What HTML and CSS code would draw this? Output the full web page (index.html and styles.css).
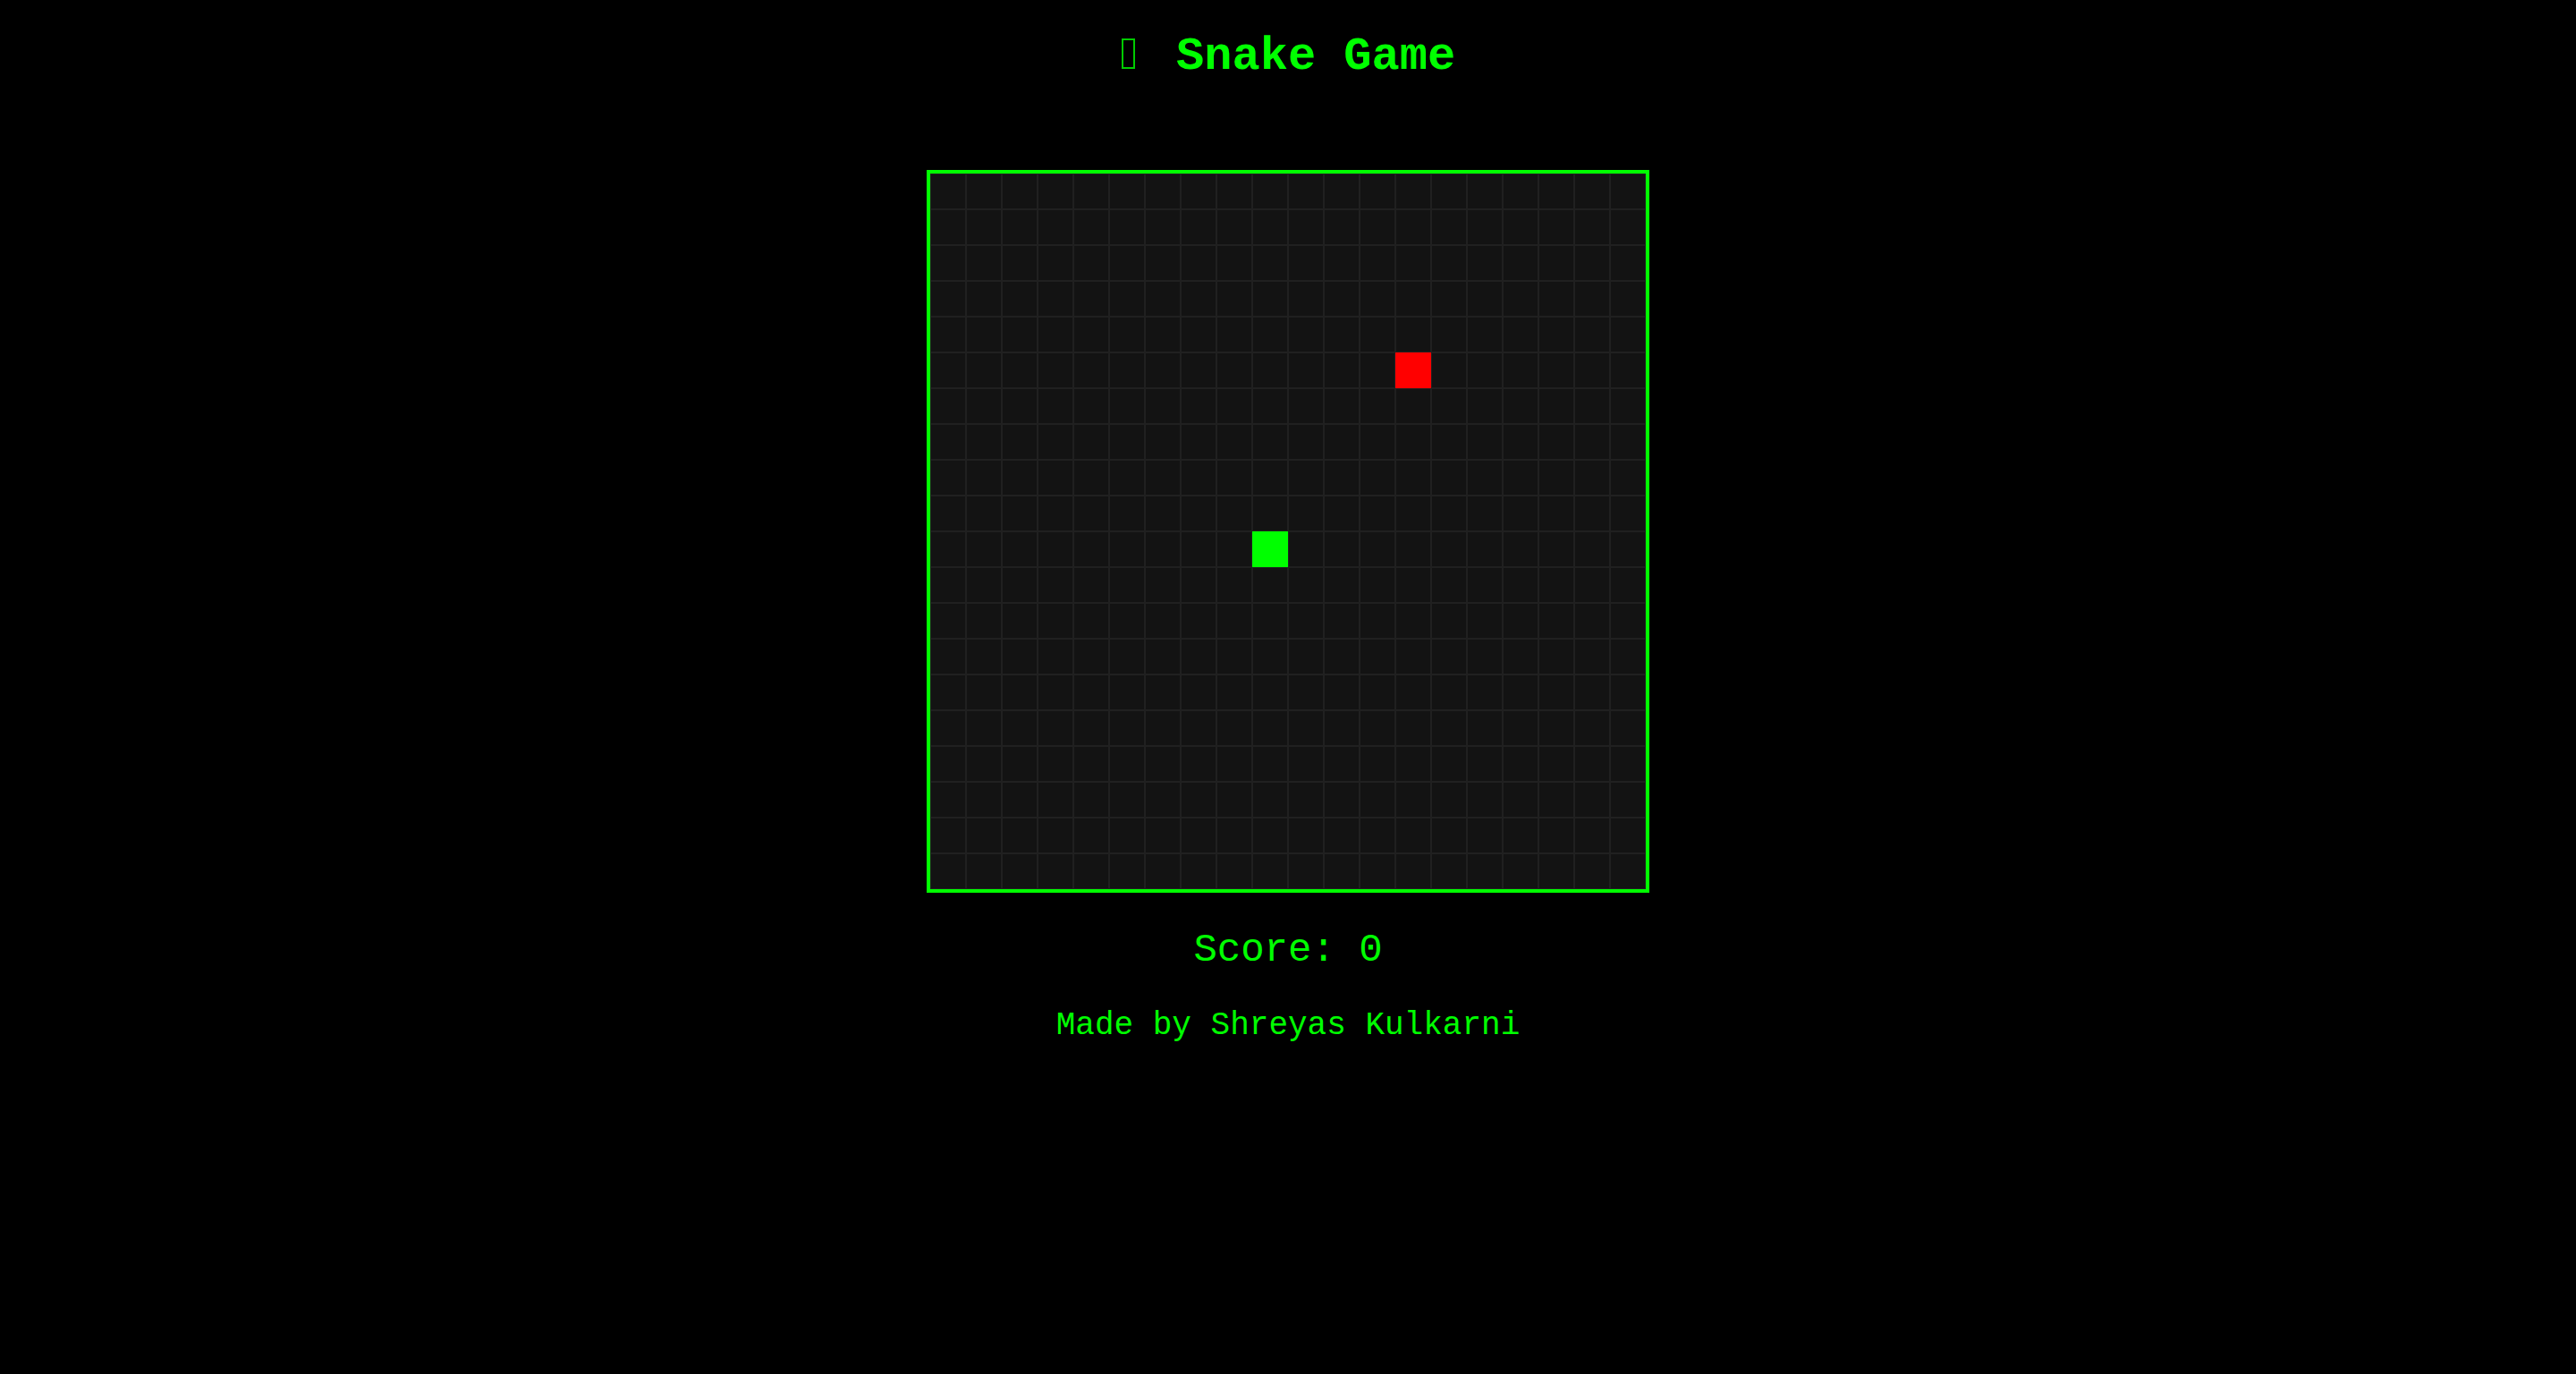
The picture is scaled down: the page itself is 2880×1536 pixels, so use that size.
FILE: index.html
```html
<!DOCTYPE html>
<html>
<head>
<meta charset="utf-8">
<title>Snake Game</title>
<link rel="stylesheet" href="styles.css">
</head>
<body>
<main class="page">
  <h1 class="title"><span class="tofu"></span> Snake Game</h1>
  <div class="board">
    <div class="cell food" style="left:520px; top:200px"></div>
    <div class="cell snake" style="left:360px; top:400px"></div>
  </div>
  <div class="score">Score: 0</div>
  <div class="credit">Made by Shreyas Kulkarni</div>
</main>
</body>
</html>
```
FILE: styles.css
```css
html, body {
  margin: 0;
  padding: 0;
  background: #000;
}
.page {
  display: flex;
  flex-direction: column;
  align-items: center;
  color: #00ff00;
  font-family: "Liberation Mono", "Courier New", monospace;
}
.title {
  margin: 34px 0 0;
  font-size: 52px;
  line-height: 60px;
  font-weight: bold;
  white-space: pre;
}
.tofu {
  display: inline-block;
  width: 11px;
  height: 30px;
  border: 2px solid #00cc00;
  vertical-align: baseline;
  margin: 0 15px 0 1px;
}
.board {
  position: relative;
  margin-top: 96px;
  width: 800px;
  height: 800px;
  border: 4px solid #00ff00;
  background-color: #131313;
  background-image:
    linear-gradient(to right, #202020 2px, transparent 2px),
    linear-gradient(to bottom, #202020 2px, transparent 2px);
  background-size: 40px 40px;
  background-position: -1px -1px;
}
.cell {
  position: absolute;
  width: 40px;
  height: 40px;
}
.food { background: #ff0000; }
.snake { background: #00ff00; }
.score {
  margin-top: 38px;
  font-size: 44px;
  line-height: 52px;
}
.credit {
  margin-top: 38px;
  font-size: 36px;
  line-height: 42px;
}
```
